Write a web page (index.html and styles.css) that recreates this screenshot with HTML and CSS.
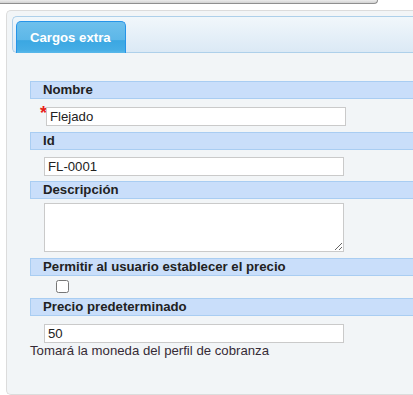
FILE: index.html
```html
<!DOCTYPE html>
<html lang="es">
<head>
<meta charset="utf-8">
<title>Cargos extra</title>
<link rel="stylesheet" href="styles.css">
</head>
<body>
<div class="topbar"></div>
<div class="panel">
  <div class="tabs-nav">
    <div class="tab">Cargos extra</div>
  </div>
  <div class="tab-body">
    <div class="hdr h-nombre">Nombre</div>
    <div class="field f-nombre"><span class="req">*</span><input class="txt" type="text" value="Flejado"></div>
    <div class="hdr h-id">Id</div>
    <div class="field f-id"><input class="txt" type="text" value="FL-0001"></div>
    <div class="hdr h-desc">Descripción</div>
    <div class="field f-desc"><textarea class="area"></textarea></div>
    <div class="hdr h-perm">Permitir al usuario establecer el precio</div>
    <div class="field f-perm"><input class="chk" type="checkbox"></div>
    <div class="hdr h-precio">Precio predeterminado</div>
    <div class="field f-precio"><input class="txt" type="text" value="50"></div>
    <div class="help">Tomará la moneda del perfil de cobranza</div>
  </div>
</div>
</body>
</html>
```

FILE: styles.css
```css
html, body {
  margin: 0;
  padding: 0;
  background: #fff;
  overflow: hidden;
  width: 413px;
  height: 395px;
}
body {
  font-family: "Liberation Sans", Arial, sans-serif;
  font-size: 13.2px;
  color: #362b36;
}
.topbar {
  width: 377px;
  height: 3px;
  background: linear-gradient(#ececec, #d2d2d2);
  border-bottom: 1px solid #8f8f8f;
  border-right: 1px solid #8f8f8f;
  border-bottom-right-radius: 4px;
  box-sizing: content-box;
}
.panel {
  margin: 6px 0 0 6px;
  border: 1px solid #dcdcdc;
  border-right: 0;
  border-radius: 5px 0 0 5px;
  background: #f2f5f7;
  padding: 5px 0 36px 5px;
}
.tabs-nav {
  height: 31px;
  padding: 4px 0 0 3px;
  border: 1px solid #aed0ea;
  border-right: 0;
  border-radius: 5px 0 0 5px;
  background: linear-gradient(#f1f7fb, #dbe9f5);
  display: flex;
  align-items: flex-start;
}
.tab {
  box-sizing: border-box;
  height: 32px;
  width: 110px;
  padding: 0 0 0 13px;
  border: 1px solid #2694e8;
  border-bottom: 0;
  border-radius: 5px 5px 0 0;
  background: linear-gradient(#6ec0ec 0%, #5cb7e8 58%, #3ba7e2 60%, #45ade5 90%, #5ab8ea 100%);
  color: #fff;
  font-weight: bold;
  line-height: 31px;
}
.tab-body {
  padding: 0 0 0 18px;
  display: flex;
  flex-direction: column;
  align-items: stretch;
}
.hdr {
  box-sizing: border-box;
  height: 18px;
  border: 1px solid #a9cdf2;
  border-right: 0;
  background: #c9defa;
  color: #222;
  font-weight: bold;
  line-height: 16px;
  padding-left: 12px;
}
.h-nombre { margin-top: 28px; }
.h-id { margin-top: 6px; }
.h-desc { margin-top: 5px; }
.h-perm { margin-top: 6px; }
.h-precio { margin-top: 5px; }
.field {
  display: flex;
  align-items: flex-start;
  padding-left: 14px;
}
.f-nombre { margin-top: 8px; }
.f-id { margin-top: 7px; }
.f-desc { margin-top: 4px; }
.f-perm { margin-top: 4px; padding-left: 26px; }
.f-precio { margin-top: 8px; }
.req {
  color: #e8201a;
  width: 6px;
  margin-left: -4px;
  font-size: 18px;
  font-weight: bold;
  line-height: 14px;
  margin-top: -1px;
}
.txt {
  box-sizing: border-box;
  width: 300px;
  height: 19px;
  margin: 0;
  padding: 0 3px;
  border: 1px solid #cacaca;
  background: #fff;
  font-family: "Liberation Sans", Arial, sans-serif;
  font-size: 13.2px;
  color: #222;
  outline: none;
}
.area {
  box-sizing: border-box;
  width: 300px;
  height: 49px;
  margin: 0;
  padding: 2px 3px;
  border: 1px solid #cacaca;
  background: #fff;
  font-family: "Liberation Sans", Arial, sans-serif;
  font-size: 13px;
  display: block;
}
.chk {
  width: 13px;
  height: 13px;
  margin: 0;
}
.help {
  margin-top: 0;
  line-height: 15px;
}
```
